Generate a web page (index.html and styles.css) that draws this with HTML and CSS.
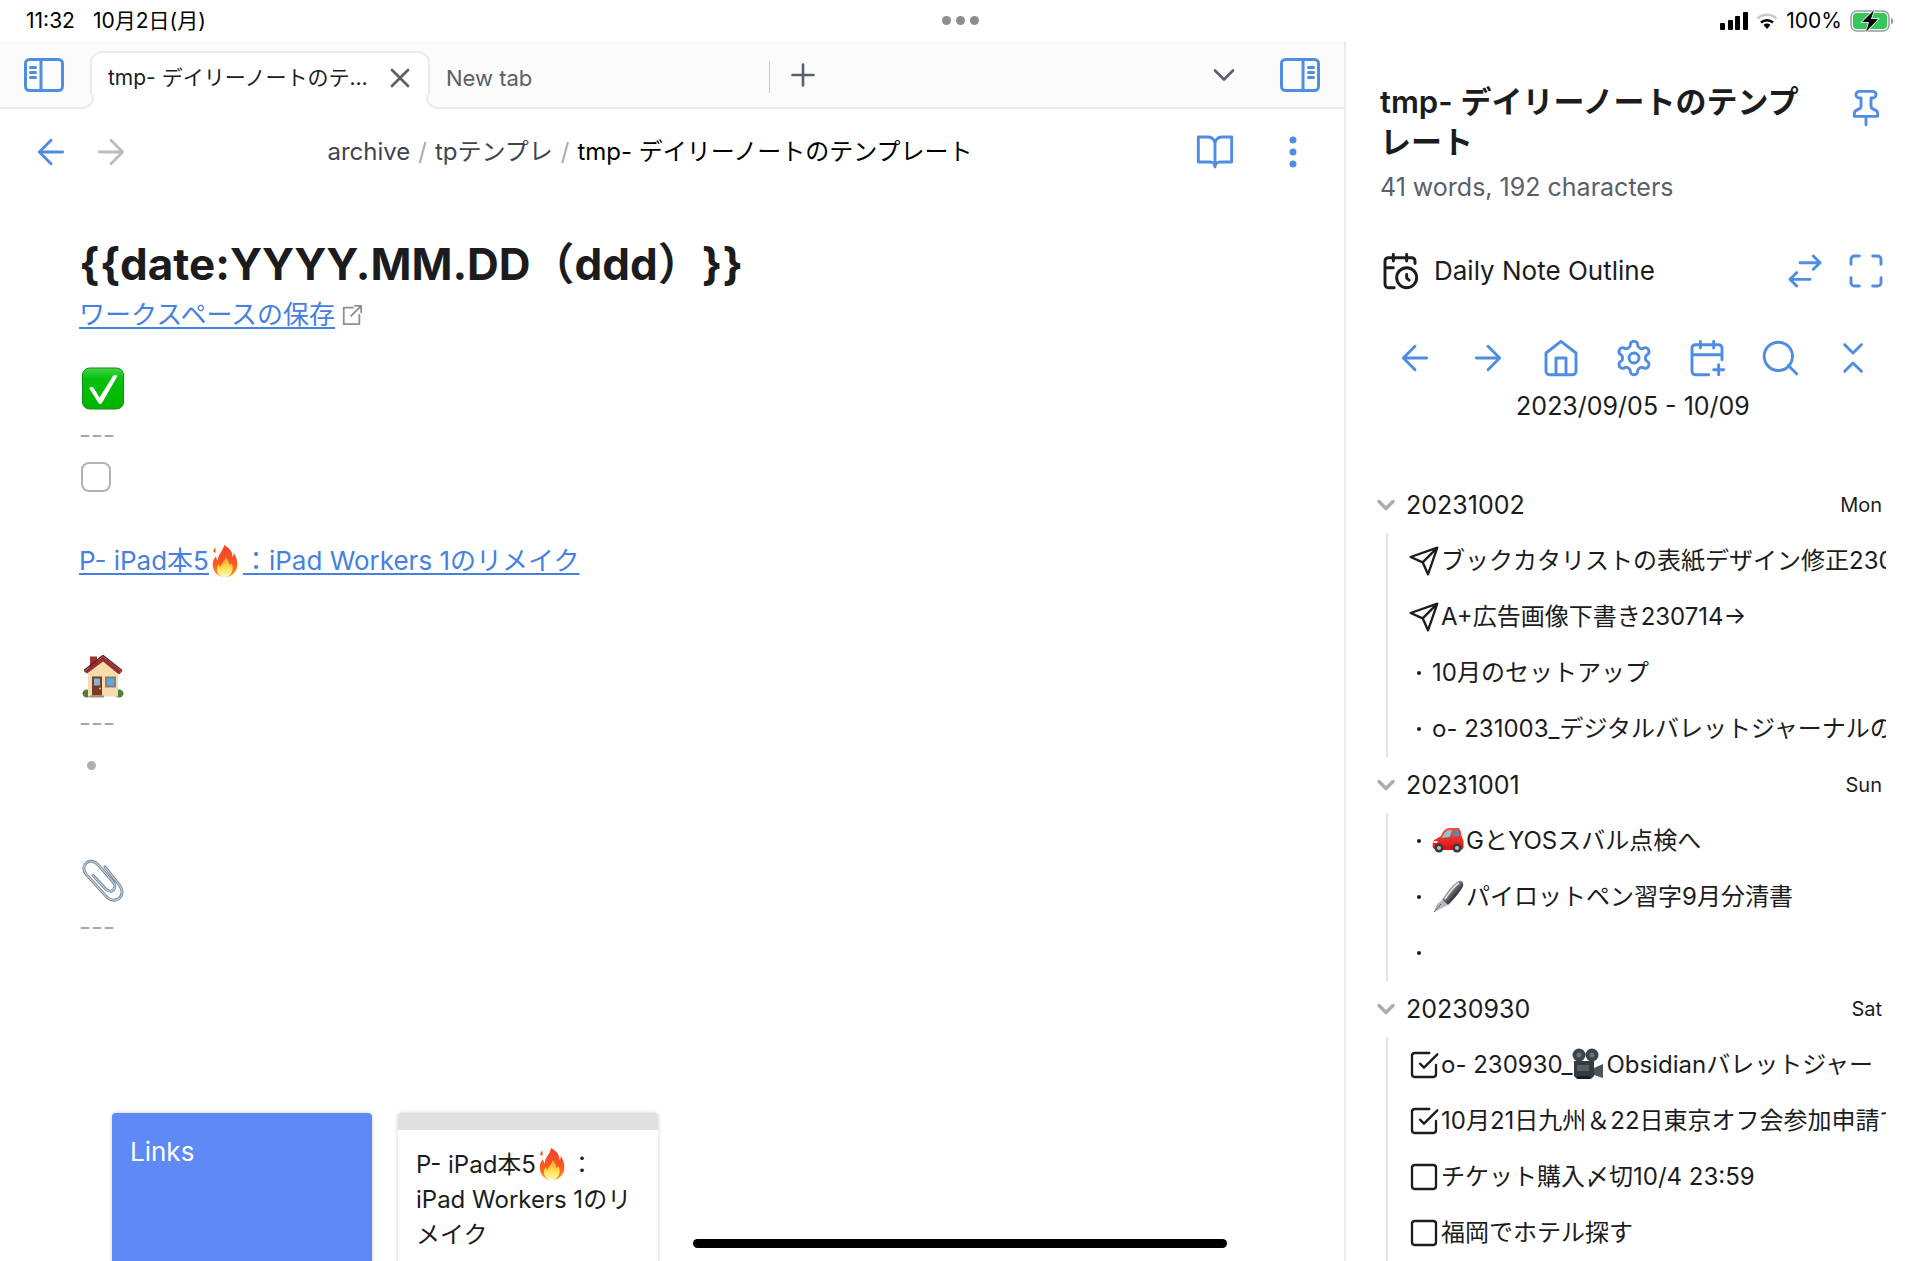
FILE: index.html
```html
<!DOCTYPE html>
<html lang="ja">
<head>
<meta charset="utf-8">
<meta name="viewport" content="width=device-width, initial-scale=1">
<title>tmp- デイリーノートのテンプレート</title>
<link rel="stylesheet" href="styles.css">
</head>
<body>
<svg class="sprite" aria-hidden="true">
  <defs>
    <linearGradient id="g-green" x1="0" y1="0" x2="0" y2="1"><stop offset="0" stop-color="#4ad24a"/><stop offset=".25" stop-color="#06c20c"/><stop offset="1" stop-color="#00b400"/></linearGradient>
    <linearGradient id="g-fire" x1="0" y1="0" x2="0" y2="1"><stop offset="0" stop-color="#f0412a"/><stop offset=".6" stop-color="#fb5a20"/><stop offset="1" stop-color="#ff9c1c"/></linearGradient>
    <linearGradient id="g-flame" x1="0" y1="0" x2="0" y2="1"><stop offset="0" stop-color="#ff9d1e"/><stop offset=".6" stop-color="#ffe45a"/><stop offset="1" stop-color="#fffbc8"/></linearGradient>
    <linearGradient id="g-pen" x1="0" y1="0" x2="1" y2="1"><stop offset="0" stop-color="#2b2e33"/><stop offset=".4" stop-color="#8b9096"/><stop offset=".6" stop-color="#3a3d42"/><stop offset="1" stop-color="#17191c"/></linearGradient>
    <linearGradient id="g-car" x1="0" y1="0" x2="0" y2="1"><stop offset="0" stop-color="#ff4b3e"/><stop offset="1" stop-color="#d90f12"/></linearGradient>
  </defs>
  <symbol id="arrow-left" viewBox="0 0 24 24"><path d="m12 19-7-7 7-7M19 12H5"/></symbol>
  <symbol id="arrow-right" viewBox="0 0 24 24"><path d="M5 12h14M12 5l7 7-7 7"/></symbol>
  <symbol id="x" viewBox="0 0 24 24"><path d="M18 6 6 18M6 6l12 12"/></symbol>
  <symbol id="plus" viewBox="0 0 24 24"><path d="M5 12h14M12 5v14"/></symbol>
  <symbol id="chevron-down" viewBox="0 0 24 24"><path d="m6 9 6 6 6-6"/></symbol>
  <symbol id="book" viewBox="0 0 24 24"><path d="M2 3h6a4 4 0 0 1 4 4v14a3 3 0 0 0-3-3H2zM22 3h-6a4 4 0 0 0-4 4v14a3 3 0 0 1 3-3h7z"/></symbol>
  <symbol id="pin" viewBox="0 0 24 24"><path d="M12 17v5M5 17h14v-1.76a2 2 0 0 0-1.11-1.79l-1.78-.9A2 2 0 0 1 15 10.76V6h1a2 2 0 0 0 0-4H8a2 2 0 0 0 0 4h1v4.76a2 2 0 0 1-1.11 1.79l-1.78.9A2 2 0 0 0 5 15.24Z"/></symbol>
  <symbol id="swap" viewBox="0 0 24 24"><path d="M9 7h12M17 3l4 4-4 4M15 17H3M7 13l-4 4 4 4"/></symbol>
  <symbol id="maximize" viewBox="0 0 24 24"><path d="M8 3H5a2 2 0 0 0-2 2v3M21 8V5a2 2 0 0 0-2-2h-3M3 16v3a2 2 0 0 0 2 2h3M16 21h3a2 2 0 0 0 2-2v-3"/></symbol>
  <symbol id="home" viewBox="0 0 24 24"><path d="m3 9 9-7 9 7v11a2 2 0 0 1-2 2H5a2 2 0 0 1-2-2zM9 22V12h6v10"/></symbol>
  <symbol id="settings" viewBox="0 0 24 24"><path d="M12.220 2h-.44a2 2 0 0 0-2 2v.18a2 2 0 0 1-1 1.730l-.43.25a2 2 0 0 1-2 0l-.15-.08a2 2 0 0 0-2.730.73l-.22.38a2 2 0 0 0 .73 2.730l.15.1a2 2 0 0 1 1 1.720v.51a2 2 0 0 1-1 1.740l-.15.09a2 2 0 0 0-.73 2.730l.22.38a2 2 0 0 0 2.730.73l.15-.08a2 2 0 0 1 2 0l.43.25a2 2 0 0 1 1 1.730V20a2 2 0 0 0 2 2h.44a2 2 0 0 0 2-2v-.18a2 2 0 0 1 1-1.730l.43-.25a2 2 0 0 1 2 0l.15.08a2 2 0 0 0 2.730-.73l.22-.39a2 2 0 0 0-.73-2.730l-.15-.08a2 2 0 0 1-1-1.740v-.5a2 2 0 0 1 1-1.740l.15-.09a2 2 0 0 0 .73-2.730l-.22-.38a2 2 0 0 0-2.730-.73l-.15.08a2 2 0 0 1-2 0l-.43-.25a2 2 0 0 1-1-1.730V4a2 2 0 0 0-2-2z"/><circle cx="12" cy="12" r="3"/></symbol>
  <symbol id="calendar-plus" viewBox="0 0 24 24"><path d="M21 13V6a2 2 0 0 0-2-2H5a2 2 0 0 0-2 2v14a2 2 0 0 0 2 2h8M16 2v4M8 2v4M3 10h18M19 16v6M16 19h6"/></symbol>
  <symbol id="calendar-clock" viewBox="0 0 24 24"><path d="M21 7.500V6a2 2 0 0 0-2-2H5a2 2 0 0 0-2 2v14a2 2 0 0 0 2 2h3.500M16 2v4M8 2v4M3 10h5M17.500 17.500 16 16.250V14"/><circle cx="16" cy="16" r="6"/></symbol>
  <symbol id="search" viewBox="0 0 24 24"><circle cx="11" cy="11" r="8.500"/><path d="m22 21.500-5-5"/></symbol>
  <symbol id="collapse" viewBox="0 0 24 24"><path d="m7 20 5-5 5 5M7 4l5 5 5-5"/></symbol>
  <symbol id="send" viewBox="0 0 24 24"><path d="m22 2-7 20-4-9-9-4ZM22 2 11 13"/></symbol>
  <symbol id="external" viewBox="0 0 24 24"><path d="M13 4H3v18h17V12M15 2h7v7M22 2 11 13"/></symbol>
  <symbol id="panel" viewBox="0 0 40 34"><rect x="1.500" y="1.500" width="37" height="31" rx="4"/><path d="M17 2v30"/><path d="M6.500 9.500h5M6.500 14.500h5M6.500 19.500h5"/></symbol>

  <symbol id="e-check" viewBox="0 0 42 42"><rect x=".5" y=".5" width="41" height="41" rx="7" fill="url(#g-green)" stroke="#0b8f14"/><path d="M7 20.500c2-1.500 4-1.500 5 .5l5.500 9L31 8.500c1-1.500 3.500-1.200 4.500 0L20 35.500c-1 1.500-2.500 1.500-3.500 0z" fill="#fff"/></symbol>
  <symbol id="e-fire" viewBox="0 0 32 34"><path d="M15 0c7 4 9 8 9 13 1-1 1.500-3 1-5 3 4 4.500 9 4 14-.6 7-6 12-13 12S3 29 3 21c0-4 1.500-7 3.500-9 .2 2 .8 3.500 2 4.500C8 10 14 7 15 0Z" fill="url(#g-fire)"/><path d="M4 8c-1-2 0-4 2-5-.5 2 .5 3 0 5z" fill="#fb5a20"/><path d="M16.500 13c4 3 3 6 4.500 8 1 0 1.500-1 1.500-2 2 3 2 6 1 9-1.300 4-4 6-7.500 6-5 0-8.500-3.500-8.500-8 0-2 .6-4 2-6 .4 2 1 3 2 3.500 0-4 5-6 5-10.500Z" fill="url(#g-flame)"/></symbol>
  <symbol id="e-house" viewBox="0 0 42 42"><ellipse cx="5" cy="38" rx="4.500" ry="4" fill="#4f7f33"/><ellipse cx="37" cy="38" rx="4.500" ry="4" fill="#4f7f33"/><path d="M8 1h7v14H8z" fill="#a42e2b"/><path d="M6 15 21 4l15 12v25H6z" fill="#f5dcae"/><path d="m2 16 19-15 19 15-3 3L21 6 5 18z" fill="#9d2a2d"/><path d="m2 15 19-15 19 15" fill="none" stroke="#4e2022" stroke-width="1.500"/><path d="M10 21h10v19H10z" fill="#7b3b25"/><path d="M12 23h6v7h-6z" fill="#7fb6df"/><path d="M23 21h11v11H23z" fill="#84807a"/><path d="M25 23h7v7h-7z" fill="#58a9dd"/><path d="M8 40h14v2H8z" fill="#9b8f88"/><circle cx="18" cy="33" r="1" fill="#f2c64f"/></symbol>
  <symbol id="e-clip" viewBox="0 0 42 44"><g fill="none" stroke-linecap="round"><path d="M11 17 23 30c6 7 14 0 8-7L16 6C8-3-4 6 4 16l20 22c9 10 22 0 14-11L23 8" stroke="#71808f" stroke-width="3"/><path d="M11 17 23 30c6 7 14 0 8-7L16 6C8-3-4 6 4 16l20 22c9 10 22 0 14-11L23 8" stroke="#c4d4e4" stroke-width="1.200"/></g></symbol>
  <symbol id="e-car" viewBox="0 0 32 26"><path d="M9 9c3-7 5-8 10-8h7c2 0 3 3 3.500 8l2 5v7l-2 2H4l-3-2c-1-5 0-8 3-9z" fill="url(#g-car)"/><path d="M11 9c2-5 4-6 9-6l-2 7-9 1z" fill="#8dc4da"/><path d="M22 3h4c1 2 1.500 4 1.500 6l-7 1z" fill="#5a8ba0"/><circle cx="7" cy="21" r="4.500" fill="#3a3a3e"/><circle cx="7" cy="21" r="2" fill="#b9bcc0"/><circle cx="25" cy="21" r="4.500" fill="#3a3a3e"/><circle cx="25" cy="21" r="2" fill="#b9bcc0"/><path d="M2 14h4l-1 2H1z" fill="#ffe9c2"/></symbol>
  <symbol id="e-pen" viewBox="0 0 32 32"><path d="M27 1c3-1 5 2 4 5-2 5-8 12-15 19l-6-5C15 12 22 3 27 1Z" fill="url(#g-pen)"/><path d="m10 20 6 5-6 3-8 4 3-8z" fill="#b5b9bd"/><path d="m2 32 7-8" stroke="#5b5f64" stroke-width="1"/><path d="M27 3c-5 3-10 10-14 16" stroke="#e5e8ea" stroke-width="1.500" fill="none"/></symbol>
  <symbol id="e-camera" viewBox="0 0 32 32"><circle cx="7" cy="7" r="6.500" fill="#3b4248"/><circle cx="20" cy="7" r="6.500" fill="#3b4248"/><circle cx="7" cy="7" r="2.500" fill="#69727a"/><circle cx="20" cy="7" r="2.500" fill="#69727a"/><path d="M2 13h20v15l-3 3H5l-3-3z" fill="#343a40"/><path d="m22 20 9-4v14l-9-3z" fill="#4c545b"/><path d="M5 17h12v6H5z" fill="#555e66"/><path d="M5 28h13v3H5z" fill="#1d2023"/></symbol>
</svg>

<div class="app">
  <header class="status">
    <div class="status-left"><time>11:32</time><time>10月2日(月)</time></div>
    <div class="status-dots"><i></i><i></i><i></i></div>
    <div class="status-right">
      <svg class="signal" viewBox="0 0 28 18" role="img" aria-label="Signal"><rect x="0" y="11" width="5" height="7" rx="1"/><rect x="8" y="8" width="5" height="10" rx="1"/><rect x="15" y="4" width="5" height="14" rx="1"/><rect x="23" y="0" width="5" height="18" rx="1"/></svg>
      <svg class="wifi" viewBox="0 0 22 16" role="img" aria-label="Wi-Fi"><path d="M1.500 5.500a14 14 0 0 1 19 0" fill="none" stroke="#c9c9c9" stroke-width="2.500"/><path d="M5 9.500a9 9 0 0 1 12 0" fill="none" stroke="#000" stroke-width="2.500"/><path d="M7.500 12a5 5 0 0 1 7 0L11 16z"/></svg>
      <span>100%</span>
      <svg class="battery" viewBox="0 0 44 22" role="img" aria-label="Charging"><rect x="1" y="1" width="38" height="20" rx="6" fill="none" stroke="#9b9b9b" stroke-width="1.500"/><rect x="3" y="3" width="34" height="16" rx="4" fill="#34c759"/><path d="M41 8c3 .5 3 6 0 6.500z" fill="#9b9b9b"/><path d="M24 0 12 12h7l-3 10 12-13h-7z" fill="#000" stroke="#fff" stroke-width="1.500" paint-order="stroke"/></svg>
    </div>
  </header>

  <div class="workspace">
    <main class="main">
      <nav class="tabbar" aria-label="Tabs">
        <button class="icon-btn toggle-left" aria-label="Toggle left sidebar"><svg class="icon panel"><use href="#panel"/></svg></button>
        <div class="tab tab-active"><button class="tab-name">tmp- デイリーノートのテンプレート</button><button class="tab-close" aria-label="Close"><svg class="icon"><use href="#x"/></svg></button></div>
        <div class="tab tab-idle"><button class="tab-name">New tab</button></div>
        <button class="icon-btn new-tab" aria-label="New tab"><svg class="icon"><use href="#plus"/></svg></button>
        <button class="icon-btn tab-list" aria-label="Tab list"><svg class="icon"><use href="#chevron-down"/></svg></button>
        <button class="icon-btn" aria-label="Toggle right sidebar"><svg class="icon panel panel-right"><use href="#panel"/></svg></button>
      </nav>

      <div class="view-header">
        <div class="nav-buttons">
          <button class="icon-btn" aria-label="Back"><svg class="icon"><use href="#arrow-left"/></svg></button>
          <button class="icon-btn muted" aria-label="Forward" disabled><svg class="icon"><use href="#arrow-right"/></svg></button>
        </div>
        <nav class="crumbs" aria-label="Path"><a href="#archive">archive</a><span class="sep">/</span><a href="#tp">tpテンプレ</a><span class="sep">/</span><span class="current">tmp- デイリーノートのテンプレート</span></nav>
        <div class="view-actions">
          <button class="icon-btn" aria-label="Reading view"><svg class="icon"><use href="#book"/></svg></button>
          <button class="icon-btn" aria-label="More options"><svg class="dots" viewBox="0 0 8 32"><circle cx="4" cy="4" r="3.500"/><circle cx="4" cy="16" r="3.500"/><circle cx="4" cy="28" r="3.500"/></svg></button>
        </div>
      </div>

      <article class="note">
        <h1>{{date:YYYY.MM.DD（ddd）}}</h1>
        <p class="line"><a href="#workspace">ワークスペースの保存</a><svg class="icon ext"><use href="#external"/></svg></p>
        <h2><svg class="emoji-lg" role="img" aria-label="Check"><use href="#e-check"/></svg></h2>
        <p class="line rule">---</p>
        <p class="line"><input class="task" type="checkbox" aria-label="Task"></p>
        <p class="line"></p>
        <p class="line"><a href="#ipad">P- iPad本5<svg class="emoji" role="img" aria-label="Fire"><use href="#e-fire"/></svg>：iPad Workers 1のリメイク</a></p>
        <p class="line"></p>
        <h2><svg class="emoji-lg" role="img" aria-label="House"><use href="#e-house"/></svg></h2>
        <p class="line rule">---</p>
        <ul class="bullets"><li class="line"></li></ul>
        <p class="line"></p>
        <h2><svg class="emoji-lg" role="img" aria-label="Paperclip"><use href="#e-clip"/></svg></h2>
        <p class="line rule">---</p>
      </article>

      <section class="cards">
        <div class="card card-links">Links</div>
        <a class="card card-note" href="#ipad">P- iPad本5<svg class="emoji" role="img" aria-label="Fire"><use href="#e-fire"/></svg>：<br>iPad Workers 1のリメイク</a>
      </section>
    </main>

    <aside class="side">
      <div class="side-head">
        <h2>tmp- デイリーノートのテンプレート</h2>
        <button class="icon-btn" aria-label="Pin"><svg class="icon"><use href="#pin"/></svg></button>
      </div>
      <p class="counts">41 words, 192 characters</p>
      <div class="plugin-head">
        <svg class="icon dark"><use href="#calendar-clock"/></svg>
        <h3>Daily Note Outline</h3>
        <button class="icon-btn" aria-label="Switch view"><svg class="icon"><use href="#swap"/></svg></button>
        <button class="icon-btn" aria-label="Expand"><svg class="icon"><use href="#maximize"/></svg></button>
      </div>
      <div class="toolbar">
        <button class="icon-btn" aria-label="Previous"><svg class="icon"><use href="#arrow-left"/></svg></button>
        <button class="icon-btn" aria-label="Next"><svg class="icon"><use href="#arrow-right"/></svg></button>
        <button class="icon-btn" aria-label="Home"><svg class="icon"><use href="#home"/></svg></button>
        <button class="icon-btn" aria-label="Settings"><svg class="icon"><use href="#settings"/></svg></button>
        <button class="icon-btn" aria-label="Create note"><svg class="icon"><use href="#calendar-plus"/></svg></button>
        <button class="icon-btn" aria-label="Search"><svg class="icon"><use href="#search"/></svg></button>
        <button class="icon-btn" aria-label="Collapse all"><svg class="icon"><use href="#collapse"/></svg></button>
      </div>
      <p class="range">2023/09/05 - 10/09</p>

      <div class="outline">
        <section>
          <button class="day"><svg class="icon"><use href="#chevron-down"/></svg><span>20231002</span><small>Mon</small></button>
          <ul>
            <li><svg class="icon lead"><use href="#send"/></svg><span>ブックカタリストの表紙デザイン修正230</span></li>
            <li><svg class="icon lead"><use href="#send"/></svg><span>A+広告画像下書き230714→</span></li>
            <li class="dot"><span>10月のセットアップ</span></li>
            <li class="dot"><span>o- 231003_デジタルバレットジャーナルの</span></li>
          </ul>
        </section>
        <section>
          <button class="day"><svg class="icon"><use href="#chevron-down"/></svg><span>20231001</span><small>Sun</small></button>
          <ul>
            <li class="dot"><span><svg class="emoji" role="img" aria-label="Car"><use href="#e-car"/></svg>GとYOSスバル点検へ</span></li>
            <li class="dot"><span><svg class="emoji" role="img" aria-label="Pen"><use href="#e-pen"/></svg>パイロットペン習字9月分清書</span></li>
            <li class="dot"><span></span></li>
          </ul>
        </section>
        <section>
          <button class="day"><svg class="icon"><use href="#chevron-down"/></svg><span>20230930</span><small>Sat</small></button>
          <ul>
            <li><input class="lead" id="t1" type="checkbox" checked><label for="t1">o- 230930_<svg class="emoji" role="img" aria-label="Camera"><use href="#e-camera"/></svg>Obsidianバレットジャー</label></li>
            <li><input class="lead" id="t2" type="checkbox" checked><label for="t2">10月21日九州＆22日東京オフ会参加申請で</label></li>
            <li><input class="lead" id="t3" type="checkbox"><label for="t3">チケット購入〆切10/4 23:59</label></li>
            <li><input class="lead" id="t4" type="checkbox"><label for="t4">福岡でホテル探す</label></li>
          </ul>
        </section>
      </div>
    </aside>
  </div>
  <div class="home-indicator"></div>
</div>
</body>
</html>
```

FILE: styles.css
```css
:root {
  --blue: #4f8de2;
  --link: #4680e0;
  --ink: #1c1c1e;
  --muted: #5a6069;
  --line: #ebebeb;
}

* { box-sizing: border-box; }

body, h1, h2, h3, p, ul { margin: 0; padding: 0; }
ul { list-style: none; }

body {
  background: #fff;
  color: var(--ink);
  font-family: Inter, "Noto Sans CJK JP", sans-serif;
  font-size: 24px;
  line-height: 40px;
  text-spacing-trim: space-all;
}

button {
  margin: 0;
  padding: 0;
  border: 0;
  background: none;
  color: inherit;
  font: inherit;
  text-align: left;
}

.sprite { position: absolute; width: 0; height: 0; }

.icon {
  display: block;
  flex: none;
  width: 40px;
  height: 40px;
  fill: none;
  stroke: currentColor;
  stroke-width: 1.75;
  stroke-linecap: round;
  stroke-linejoin: round;
}

.icon-btn {
  display: flex;
  flex: none;
  align-items: center;
  justify-content: center;
  width: 40px;
  height: 40px;
  color: var(--blue);
}

.muted { color: #bdbdbd; }
.dark { color: var(--ink); }

.app {
  display: flex;
  flex-direction: column;
  height: 100vh;
  overflow: hidden;
}

/* Status bar */
.status {
  display: grid;
  flex: none;
  grid-template-columns: 1fr auto 1fr;
  align-items: center;
  height: 41px;
  padding: 0 26px;
  color: #000;
  font-size: 21px;
}
.status-left { display: flex; gap: 18px; }
.status-dots { display: flex; gap: 5px; }
.status-dots i { width: 9px; height: 9px; border-radius: 50%; background: #8e8e8e; }
.status-right { display: flex; align-items: center; justify-content: flex-end; gap: 8px; }
.signal { width: 28px; height: 18px; }
.wifi { width: 22px; height: 16px; }
.battery { width: 44px; height: 22px; }

.workspace { display: flex; flex: 1; min-height: 0; }
.main { display: flex; flex: 1; flex-direction: column; min-width: 0; }

/* Tabs */
.tabbar {
  display: flex;
  flex: none;
  align-items: center;
  height: 68px;
  padding: 2px 24px 0;
  border-bottom: 2px solid var(--line);
  background: #fbfbfb;
}
.toggle-left { margin-right: 26px; }
.icon.panel { height: 34px; stroke-width: 3; }
.panel-right { transform: scaleX(-1); }
.tab {
  position: relative;
  display: flex;
  align-items: center;
  align-self: flex-end;
  width: 340px;
  height: 58px;
  padding: 0 12px 0 16px;
  color: var(--muted);
  font-size: 22px;
}
.tab-active {
  margin-bottom: -2px;
  padding-bottom: 6px;
  border: 2px solid var(--line);
  border-bottom: 0;
  border-radius: 12px 12px 0 0;
  background: #fff;
  color: var(--ink);
  font-size: 21px;
}
.tab-active::before,
.tab-active::after {
  content: "";
  position: absolute;
  bottom: 0;
  width: 12px;
  height: 12px;
  border: 0 solid var(--line);
  border-bottom-width: 2px;
  background: #fbfbfb;
  box-shadow: 0 0 0 4px #fff;
}
.tab-active::before { left: -12px; border-right-width: 2px; border-bottom-right-radius: 12px; clip-path: inset(0 -2px 0 0); }
.tab-active::after { right: -12px; border-left-width: 2px; border-bottom-left-radius: 12px; clip-path: inset(0 0 0 -2px); }
.tab-name { flex: 1; min-width: 0; overflow: hidden; text-overflow: ellipsis; white-space: nowrap; }
.tab-close { margin-left: 8px; color: var(--muted); }
.tab-close .icon { width: 32px; height: 32px; stroke-width: 2; }
.tab-idle::after {
  content: "";
  position: absolute;
  right: 0;
  top: 12px;
  width: 1px;
  height: 32px;
  background: #c9c9c9;
}
.new-tab { margin-left: 13px; color: var(--muted); }
.new-tab .icon { width: 36px; height: 36px; }
.tab-list { margin-left: auto; margin-right: 36px; color: var(--muted); }
.tab-list .icon { width: 36px; height: 36px; }

/* Note header */
.view-header {
  display: flex;
  flex: none;
  align-items: center;
  height: 86px;
  padding: 0 31px;
}
.nav-buttons { display: flex; gap: 20px; }
.crumbs {
  flex: 1;
  padding-right: 26px;
  text-align: center;
  white-space: nowrap;
}
.crumbs a { color: #3f4450; text-decoration: none; }
.crumbs .sep { margin: 0 8px; color: #ababab; }
.crumbs .current { color: #000; }
.view-actions { display: flex; gap: 38px; }
.dots { width: 8px; height: 32px; fill: var(--blue); }

/* Note body */
.note { flex: none; padding: 39px 79px 0; }
.note h1 { font-size: 44px; font-weight: 700; line-height: 60px; white-space: nowrap; }
.note h2 { display: flex; align-items: center; height: 78px; padding: 26px 3px 0; }
.line { display: flex; align-items: center; height: 42px; font-size: 26px; }
.line a { color: var(--link); text-decoration: underline; text-decoration-thickness: 2px; text-underline-offset: 3px; }
.rule { color: #a5a8ad; }
.icon.ext { width: 22px; height: 22px; margin-left: 6px; color: #8f8f8f; stroke-width: 2; }
.emoji-lg { width: 42px; height: 43px; }
.emoji { display: inline-block; width: 32px; height: 32px; margin-right: 2px; vertical-align: -7px; }
.task {
  width: 30px;
  height: 30px;
  margin: 0 2px;
  border: 2px solid #b0b3b8;
  border-radius: 8px;
  background: #fff;
  appearance: none;
}
.bullets .line::before {
  content: "";
  width: 9px;
  height: 9px;
  margin-left: 8px;
  border-radius: 50%;
  background: #abb0b6;
}

/* Link cards */
.cards {
  display: flex;
  flex: 1 0 auto;
  gap: 26px;
  margin-top: 165px;
  padding: 0 112px;
}
.card {
  width: 260px;
  height: 260px;
  padding: 18px;
  border-radius: 4px;
  box-shadow: 0 0 4px rgba(0, 0, 0, 0.2);
  color: var(--ink);
  line-height: 35px;
  text-decoration: none;
}
.card-links { padding-top: 21px; background: #5f8af5; color: #fff; font-size: 26px; }
.card-note { padding-right: 16px; padding-top: 17px; border-top: 17px solid #e0e0e0; background: #fff; }

/* Right sidebar */
.side {
  flex: 0 0 30%;
  min-width: 0;
  padding: 41px 34px 0;
  border-left: 2px solid var(--line);
}
.side-head { display: flex; align-items: flex-start; justify-content: space-between; gap: 40px; }
.side-head h2 { font-size: 31px; font-weight: 600; line-height: 40px; }
.side-head .icon-btn { margin-top: 6px; }
.counts { margin-top: 5px; color: var(--muted); font-size: 25px; }
.plugin-head { display: flex; align-items: center; height: 40px; margin-top: 44px; }
.plugin-head h3 { flex: 1; margin-left: 14px; font-size: 26px; font-weight: 400; }
.plugin-head .icon-btn + .icon-btn { margin-left: 21px; }
.toolbar { display: flex; justify-content: space-between; margin-top: 47px; padding: 0 13px 0 15px; }
.range { margin-top: 8px; font-size: 25px; text-align: center; }

/* Outline */
.outline { margin-top: 51px; }
.day { display: flex; align-items: center; width: 100%; height: 56px; padding-right: 4px; font-size: 25px; }
.day .icon { width: 28px; height: 28px; margin: 0 6px 0 -8px; color: #a9adb3; stroke-width: 3; }
.day span { flex: 1; }
.day small { font-size: 20px; }
.outline ul { margin-left: 6px; border-left: 2px solid #e3e3e3; }
.outline li {
  display: flex;
  align-items: center;
  height: 56px;
  padding-left: 20px;
  overflow: hidden;
  white-space: nowrap;
}
.lead {
  flex: none;
  width: 32px;
  height: 32px;
  margin: 0 1px 0 0;
  stroke-width: 1.75;
}
input.lead {
  appearance: none;
  background: url("data:image/svg+xml,%3Csvg xmlns='http://www.w3.org/2000/svg' viewBox='0 0 24 24' fill='none' stroke='%231c1c1e' stroke-width='1.75'%3E%3Crect x='3' y='3' width='18' height='18' rx='2'/%3E%3C/svg%3E") center / contain no-repeat;
}
input.lead:checked {
  background-image: url("data:image/svg+xml,%3Csvg xmlns='http://www.w3.org/2000/svg' viewBox='0 0 24 24' fill='none' stroke='%231c1c1e' stroke-width='1.75' stroke-linecap='round' stroke-linejoin='round'%3E%3Cpath d='m9 11 3 3L22 4M21 12v7a2 2 0 0 1-2 2H5a2 2 0 0 1-2-2V5a2 2 0 0 1 2-2h11'/%3E%3C/svg%3E");
}
.dot::before {
  content: "";
  flex: none;
  width: 4px;
  height: 4px;
  margin: 0 11px 0 9px;
  border-radius: 50%;
  background: var(--ink);
}

.home-indicator {
  position: fixed;
  bottom: 13px;
  left: 50%;
  width: 534px;
  height: 9px;
  border-radius: 5px;
  background: #000;
  transform: translateX(-50%);
}
```
